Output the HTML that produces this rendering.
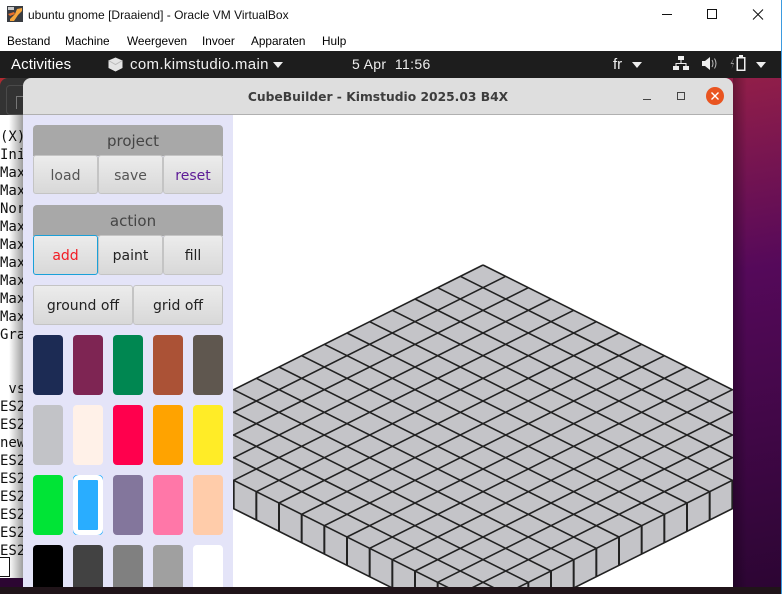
<!DOCTYPE html>
<html><head><meta charset="utf-8"><style>
html,body{margin:0;padding:0;background:#fff;overflow:hidden}
#r{position:relative;width:783px;height:594px;overflow:hidden;background:#fff;font-family:"Liberation Sans",sans-serif}
#r div{position:absolute}
.m{top:33px;font-size:11.8px;color:#000;white-space:nowrap;height:16px;line-height:16px}
.t{font-family:"DejaVu Sans Mono",monospace;font-size:14px;left:0;line-height:18px;color:#111;white-space:pre}
.g{color:#fff;font-size:15px;top:56px;line-height:17px;white-space:nowrap}
.h{box-sizing:border-box;padding-left:10px;left:33px;width:190px;height:31px;background:#a8a8a8;border-radius:4px 4px 0 0;text-align:center;color:#444;font:15px/33px "DejaVu Sans",sans-serif}
.b{box-sizing:border-box;height:39px;border:1px solid #c4c4c4;border-radius:3px;background:linear-gradient(#ececec,#d8d8d8);text-align:center;font:14px/41px "DejaVu Sans",sans-serif;color:#222}
.s{width:30px;height:60px;border-radius:4px}
</style></head><body><div id="r">

<!-- VirtualBox chrome -->
<svg style="position:absolute;left:7px;top:6px" width="16" height="16" viewBox="0 0 16 16"><rect width="16" height="16" fill="#3a3d42"/><path d="M1 1h6v3H1z" fill="#ccc"/><path d="M3 13 L8 8 L10 3 L15 2 L15 5 L11 9 L7 15 L3 15Z" fill="#f5a63c"/><path d="M1 8 L7 6 L8 8 L3 10Z" fill="#e8702a"/></svg>
<div style="left:28px;top:7px;font-size:12px;line-height:16px;color:#111;white-space:nowrap">ubuntu gnome [Draaiend] - Oracle VM VirtualBox</div>
<svg style="position:absolute;left:655px;top:5px" width="120" height="20" viewBox="0 0 120 20" fill="none" stroke="#111" stroke-width="1"><path d="M7 9.500H17"/><rect x="52.500" y="4.500" width="9" height="9"/><path d="M98 4.500L108 14.500M108 4.500L98 14.500"/></svg>
<div class="m" style="left:7px">Bestand</div>
<div class="m" style="left:65px">Machine</div>
<div class="m" style="left:127px">Weergeven</div>
<div class="m" style="left:202px">Invoer</div>
<div class="m" style="left:251px">Apparaten</div>
<div class="m" style="left:322px">Hulp</div>
<div style="left:781px;top:0;width:1px;height:594px;background:#3b9be0"></div>

<!-- desktop -->
<div style="left:0;top:78px;width:781px;height:509px;background:linear-gradient(170deg,#b02a30 0%,#8e1d4a 22%,#55095a 50%,#2c0533 100%)"></div>
<div style="left:733px;top:78px;width:14px;height:509px;background:linear-gradient(90deg,rgba(0,0,0,.28),rgba(0,0,0,0))"></div>
<div style="left:0;top:51px;width:781px;height:27px;background:#1d1d1d"></div>
<div class="g" style="left:11px;letter-spacing:.1px">Activities</div>
<svg style="position:absolute;left:108px;top:57px" width="15" height="15" viewBox="0 0 15 15"><path d="M7.500 .5L14.500 3.500V11L7.500 14.500L.5 11V3.500Z" fill="#e4e4e4"/><path d="M.5 3.500L7.500 7.500L14.500 3.500" fill="none" stroke="#bbb"/></svg>
<div class="g" style="left:130px;letter-spacing:.35px;color:#f0f0f0">com.kimstudio.main</div>
<svg style="position:absolute;left:273px;top:62px" width="10" height="6"><path d="M0 0H10L5 6Z" fill="#eee"/></svg>
<div class="g" style="left:352px;color:#eee;font-size:14px;letter-spacing:.35px">5 Apr&nbsp;&nbsp;11:56</div>
<div class="g" style="left:613px;color:#eee">fr</div>
<svg style="position:absolute;left:632px;top:62px" width="10" height="6"><path d="M0 0H10L5 6Z" fill="#eee"/></svg>
<svg style="position:absolute;left:673px;top:56px" width="16" height="15" viewBox="0 0 16 15" fill="#eee"><rect x="5" y="0" width="6" height="4"/><rect x="0" y="10" width="6" height="4"/><rect x="10" y="10" width="6" height="4"/><path d="M8 4V7M3 10V7.500H13V10" fill="none" stroke="#eee"/></svg>
<svg style="position:absolute;left:702px;top:56px" width="16" height="15" viewBox="0 0 16 15"><path d="M0 5H3L8 1V14L3 10H0Z" fill="#eee"/><path d="M10 4Q12 7.500 10 11M12.500 2.500Q15.500 7.500 12.500 12.500" fill="none" stroke="#bbb"/></svg>
<svg style="position:absolute;left:730px;top:55px" width="16" height="17" viewBox="0 0 16 17"><path d="M4 3L0.500 9H3L1.500 14L4 8H2Z" fill="#999"/><path d="M9 0H13V2H15.500V16H6.500V2H9Z" fill="#eee"/><rect x="8" y="3.500" width="6" height="11" fill="#1d1d1d"/></svg>
<svg style="position:absolute;left:756px;top:62px" width="10" height="6"><path d="M0 0H10L5 6Z" fill="#eee"/></svg>

<!-- terminal behind -->
<div style="left:0;top:78px;width:60px;height:37px;background:#333;border-radius:8px 0 0 0"></div>
<div style="left:6px;top:85px;width:30px;height:30px;border:1px solid #4a4a4a;border-radius:4px;box-sizing:border-box"></div>
<div style="left:16px;top:96px;width:6px;height:12px;border:1px solid #777;border-width:1px 0 0 1px"></div>
<div style="left:0;top:115px;width:60px;height:463px;background:#fff"></div>
<div class="t" style="top:128px">(X)
Ini
Max
Max
Nor
Max
Max
Max
Max
Max
Max
Gra


 vs
ES2
ES2
new
ES2
ES2
ES2
ES2
ES2
ES2</div>
<div style="left:-2px;top:557px;width:12px;height:20px;box-sizing:border-box;border:1px solid #111;background:#fff"></div>
<div style="left:0;top:578px;width:60px;height:9px;background:#2c0632"></div>
<div style="left:9px;top:115px;width:14px;height:463px;background:linear-gradient(90deg,rgba(0,0,0,0),rgba(0,0,0,.38))"></div>

<!-- window -->
<div style="left:23px;top:78px;width:710px;height:37px;background:#dedede;border-radius:8px 8px 0 0;box-sizing:border-box;border-bottom:1px solid #b0b0b0"></div>
<div style="left:23px;top:89px;width:710px;text-align:center;font:bold 12.3px/17px 'DejaVu Sans',sans-serif;color:#3d3d3d;white-space:nowrap">CubeBuilder - Kimstudio 2025.03 B4X</div>
<svg style="position:absolute;left:640px;top:85px" width="90" height="24" viewBox="0 0 90 24"><path d="M3 14.500H11" stroke="#444"/><rect x="37.500" y="7.500" width="7" height="7" fill="none" stroke="#444"/><circle cx="75" cy="11" r="9" fill="#e95420"/><path d="M71.500 7.500L78.500 14.500M78.500 7.500L71.500 14.500" stroke="#fff" stroke-width="1.400"/></svg>
<div style="left:23px;top:115px;width:210px;height:472px;background:#e4e4f8"></div>
<div style="left:233px;top:115px;width:500px;height:472px;background:#fff"></div>

<div class="h" style="top:125px">project</div>
<div class="b" style="left:33px;top:155px;width:65px;color:#555">load</div>
<div class="b" style="left:98px;top:155px;width:65px;color:#555">save</div>
<div class="b" style="left:163px;top:155px;width:60px;color:#5c1a96">reset</div>
<div class="h" style="top:205px">action</div>
<div class="b" style="left:33px;top:235px;width:65px;height:40px;border-color:#1aa0d8;color:#f21c24;line-height:40px">add</div>
<div class="b" style="left:98px;top:235px;width:65px;height:40px;line-height:40px">paint</div>
<div class="b" style="left:163px;top:235px;width:60px;height:40px;line-height:40px">fill</div>
<div class="b" style="left:33px;top:285px;width:100px;height:40px;line-height:40px">ground off</div>
<div class="b" style="left:133px;top:285px;width:90px;height:40px;line-height:40px">grid off</div>

<div class="s" style="left:33px;top:335px;background:#1c2b54"></div>
<div class="s" style="left:73px;top:335px;background:#7e2553"></div>
<div class="s" style="left:113px;top:335px;background:#008751"></div>
<div class="s" style="left:153px;top:335px;background:#ab5236"></div>
<div class="s" style="left:193px;top:335px;background:#5f574f"></div>
<div class="s" style="left:33px;top:405px;background:#c2c3c7"></div>
<div class="s" style="left:73px;top:405px;background:#fff1e8"></div>
<div class="s" style="left:113px;top:405px;background:#ff004d"></div>
<div class="s" style="left:153px;top:405px;background:#ffa300"></div>
<div class="s" style="left:193px;top:405px;background:#ffec27"></div>
<div class="s" style="left:33px;top:475px;background:#00e436"></div>
<div class="s" style="left:73px;top:475px;background:#29adff"></div>
<div style="left:73px;top:475px;width:30px;height:60px;box-sizing:border-box;border:5px solid #fff;border-radius:6px"></div>
<div class="s" style="left:113px;top:475px;background:#83769c"></div>
<div class="s" style="left:153px;top:475px;background:#ff77a8"></div>
<div class="s" style="left:193px;top:475px;background:#ffccaa"></div>
<div style="left:33px;top:545px;width:30px;height:42px;border-radius:4px 4px 0 0;background:#000"></div>
<div style="left:73px;top:545px;width:30px;height:42px;border-radius:4px 4px 0 0;background:#424242"></div>
<div style="left:113px;top:545px;width:30px;height:42px;border-radius:4px 4px 0 0;background:#808080"></div>
<div style="left:153px;top:545px;width:30px;height:42px;border-radius:4px 4px 0 0;background:#a0a0a0"></div>
<div style="left:193px;top:545px;width:30px;height:42px;border-radius:4px 4px 0 0;background:#fff"></div>

<!-- iso grid -->
<svg style="position:absolute;left:233px;top:115px" width="500" height="472" viewBox="233 115 500 472">
<path d="M483 265L733 390V508.330L569.670 590H396.330L233 508.330V390Z" fill="#c4c4c8"/>
<path fill="none" stroke="#222" stroke-width="1.600" d="M483 265L733 390M460.330 276.330L733 412.670M437.670 287.670L733 435.330M415 299L733 458M392.330 310.330L732.330 480.330M369.670 321.670L709.670 491.670M347 333L687 503M324.330 344.330L664.330 514.330M301.670 355.670L641.670 525.670M279 367L619 537M256.330 378.330L596.330 548.330M233.670 389.670L573.670 559.670M233 412L551 571M233 434.670L528.330 582.330M233 457.330L498.330 590M233 480L453 590
M483 265L233 390M505.670 276.330L233 412.670M528.330 287.670L233 435.330M551 299L233 458M573.670 310.330L233.670 480.330M596.330 321.670L256.330 491.670M619 333L279 503M641.670 344.330L301.670 514.330M664.330 355.670L324.330 525.670M687 367L347 537M709.670 378.330L369.670 548.330M732.330 389.670L392.330 559.670M733 412L415 571M733 434.670L437.670 582.330M733 457.330L467.670 590M733 480L513 590"/>
<path d="M233 508.330L396.330 590M733 508.330L569.670 590" fill="none" stroke="#222" stroke-width="1.600"/>
<path d="M233.670 480.330v28.330M256.330 491.670v28.330M279 503v28.330M301.670 514.330v28.330M324.330 525.670v28.330M347 537v28.330M369.670 548.330v28.330M392.330 559.670V588M415 571V590M437.670 582.330V590M732.330 480.330v28.330M709.670 491.670v28.330M687 503v28.330M664.330 514.330v28.330M641.670 525.670v28.330M619 537v28.330M596.330 548.330v28.330M573.670 559.670V588M551 571V590M528.330 582.330V590" fill="none" stroke="#222" stroke-width="2"/>
</svg>

<div style="left:0;top:587px;width:781px;height:7px;background:#201419"></div>
</div></body></html>
